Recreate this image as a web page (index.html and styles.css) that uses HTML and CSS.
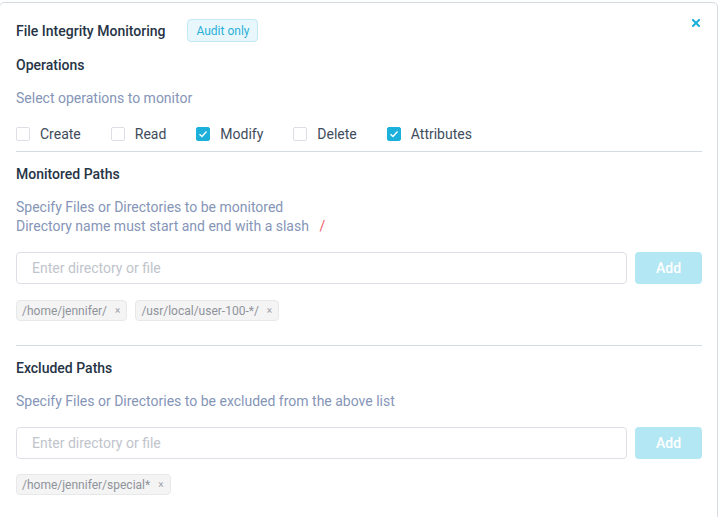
FILE: index.html
```html
<!DOCTYPE html>
<html>
<head>
<meta charset="utf-8">
<link rel="stylesheet" href="styles.css">
</head>
<body>
<div class="card">
  <button class="close" aria-label="Close">
    <svg width="8" height="8" viewBox="0 0 8 8"><path d="M1 1L7 7M7 1L1 7" stroke="#1ab0db" stroke-width="2" stroke-linecap="square"/></svg>
  </button>
  <div class="title-row">
    <h2 class="title">File Integrity Monitoring</h2>
    <span class="badge">Audit only</span>
  </div>

  <h3 class="heading mt13">Operations</h3>
  <p class="desc mt14">Select operations to monitor</p>
  <div class="checks">
    <label class="check"><span class="box"></span>Create</label>
    <label class="check"><span class="box"></span>Read</label>
    <label class="check"><span class="box on"><svg width="10" height="8" viewBox="0 0 10 8"><path d="M1.5 4.2L4 6.5L8.5 1.5" fill="none" stroke="#fff" stroke-width="1.3"/></svg></span>Modify</label>
    <label class="check"><span class="box"></span>Delete</label>
    <label class="check"><span class="box on"><svg width="10" height="8" viewBox="0 0 10 8"><path d="M1.5 4.2L4 6.5L8.5 1.5" fill="none" stroke="#fff" stroke-width="1.3"/></svg></span>Attributes</label>
  </div>
  <hr class="rule rule-a">

  <h3 class="heading">Monitored Paths</h3>
  <p class="desc mt14">Specify Files or Directories to be monitored<br>Directory name must start and end with a slash <span class="slash">/</span></p>
  <div class="add-row mt16">
    <input class="field" type="text" placeholder="Enter directory or file">
    <button class="add">Add</button>
  </div>
  <div class="chips mt16">
    <span class="chip">/home/jennifer/<span class="x">×</span></span>
    <span class="chip">/usr/local/user-100-*/<span class="x">×</span></span>
  </div>
  <hr class="rule rule-b">

  <h3 class="heading">Excluded Paths</h3>
  <p class="desc mt14">Specify Files or Directories to be excluded from the above list</p>
  <div class="add-row mt16">
    <input class="field" type="text" placeholder="Enter directory or file">
    <button class="add">Add</button>
  </div>
  <div class="chips mt15">
    <span class="chip">/home/jennifer/special*<span class="x">×</span></span>
  </div>
</div>
</body>
</html>
```

FILE: styles.css
```css
* { box-sizing: border-box; }
html, body { margin: 0; padding: 0; background: #fff; }
body {
  font-family: Roboto, "Liberation Sans", Arial, sans-serif;
  font-size: 14px;
  color: #1f2d3d;
  overflow: hidden;
  height: 517px;
}
.card {
  position: relative;
  margin: 2px 0 0 -1px;
  width: 719px;
  height: 560px;
  border: 1px solid #d6dce6;
  border-radius: 5px;
  padding: 16px 15px 0 16px;
  background: #fff;
}
.close {
  position: absolute;
  top: 12px;
  right: 13px;
  width: 16px;
  height: 16px;
  padding: 0;
  border: 0;
  background: none;
  display: flex;
  align-items: center;
  justify-content: center;
}
.title-row {
  display: flex;
  align-items: center;
  height: 23px;
}
.title {
  margin: 0;
  font-size: 14px;
  font-weight: 500;
  line-height: 20px;
  color: #263445;
}
.badge {
  margin-left: 22px;
  height: 23px;
  padding: 0 8px;
  display: inline-flex;
  align-items: center;
  font-size: 12px;
  color: #2bb0d9;
  background: #e8f7fc;
  border: 1px solid #c2eaf6;
  border-radius: 4px;
}
.heading {
  margin: 0;
  font-size: 14px;
  font-weight: 500;
  line-height: 20px;
  color: #263445;
}
.mt13 { margin-top: 13px; }
.mt14 { margin-top: 14px; }
.mt15 { margin-top: 15px; }
.mt16 { margin-top: 16px; }
.desc {
  margin-bottom: 0;
  font-size: 14px;
  line-height: 19px;
  color: #8595b7;
}
.slash {
  color: #f35a6b;
  margin-left: 7px;
}
.checks {
  display: flex;
  gap: 30px;
  margin-top: 16px;
  height: 20px;
  align-items: center;
}
.check {
  display: flex;
  align-items: center;
  gap: 10px;
  color: #404b5b;
  font-size: 14px;
  line-height: 20px;
}
.box {
  width: 14px;
  height: 14px;
  border: 1px solid #dcdfe6;
  border-radius: 2px;
  background: #fff;
  display: flex;
  align-items: center;
  justify-content: center;
}
.box.on {
  background: #1cb0da;
  border-color: #1cb0da;
}
.rule {
  border: 0;
  height: 1px;
  background: #d5dbe4;
  margin: 0;
}
.rule-a { margin-top: 7px; margin-bottom: 12px; }
.rule-b { margin-top: 24px; margin-bottom: 12px; }
.add-row {
  display: flex;
  gap: 8px;
  height: 32px;
}
.field {
  flex: 1;
  height: 32px;
  border: 1px solid #dcdfe6;
  border-radius: 4px;
  padding: 0 15px;
  font-family: inherit;
  font-size: 14px;
  color: #606266;
  outline: none;
}
.field::placeholder { color: #c0c4cc; }
.add {
  width: 67px;
  height: 32px;
  border: 0;
  border-radius: 4px;
  background: #b4e7f4;
  color: #fff;
  font-family: inherit;
  font-size: 14px;
  font-weight: 500;
  padding: 0;
}
.chips {
  display: flex;
  gap: 8px;
}
.chip {
  display: inline-flex;
  align-items: center;
  height: 21px;
  padding: 0 6px 0 5px;
  font-size: 12px;
  color: #8f9399;
  background: #f4f4f5;
  border: 1px solid #e7e8ea;
  border-radius: 4px;
}
.chip .x {
  margin-left: 8px;
  font-size: 10px;
  color: #a0a3a8;
}
```
